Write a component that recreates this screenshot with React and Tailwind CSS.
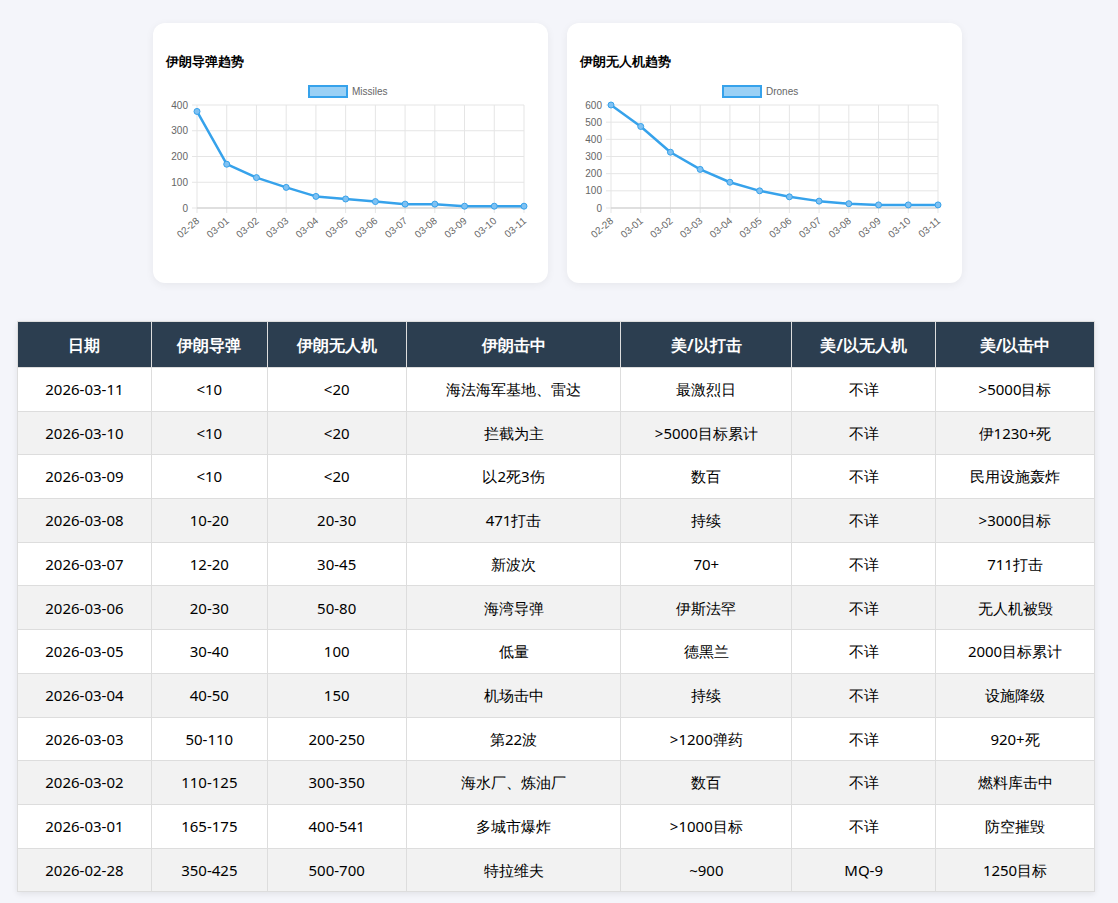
import React from "react";

const labels = ["02-28","03-01","03-02","03-03","03-04","03-05","03-06","03-07","03-08","03-09","03-10","03-11"];
const missiles = [375,170,118,80,45,35,25,15,15,7,7,7];
const drones = [600,475,325,225,150,100,65,40,25,18,18,18];

const rows = [
  ["2026-03-11","<10","<20","海法海军基地、雷达","最激烈日","不详",">5000目标"],
  ["2026-03-10","<10","<20","拦截为主",">5000目标累计","不详","伊1230+死"],
  ["2026-03-09","<10","<20","以2死3伤","数百","不详","民用设施轰炸"],
  ["2026-03-08","10-20","20-30","471打击","持续","不详",">3000目标"],
  ["2026-03-07","12-20","30-45","新波次","70+","不详","711打击"],
  ["2026-03-06","20-30","50-80","海湾导弹","伊斯法罕","不详","无人机被毁"],
  ["2026-03-05","30-40","100","低量","德黑兰","不详","2000目标累计"],
  ["2026-03-04","40-50","150","机场击中","持续","不详","设施降级"],
  ["2026-03-03","50-110","200-250","第22波",">1200弹药","不详","920+死"],
  ["2026-03-02","110-125","300-350","海水厂、炼油厂","数百","不详","燃料库击中"],
  ["2026-03-01","165-175","400-541","多城市爆炸",">1000目标","不详","防空摧毁"],
  ["2026-02-28","350-425","500-700","特拉维夫","~900","MQ-9","1250目标"],
];
const heads = ["日期","伊朗导弹","伊朗无人机","伊朗击中","美/以打击","美/以无人机","美/以击中"];
const widths = ["w-[134px]","w-[116px]","w-[139px]","w-[215px]","w-[171px]","w-[144px]","w-[159px]"];

let Chart = ({ title, label, data, max, step }) => {
  const x0 = 31, x1 = 358, y0 = 133, y1 = 30;
  const xs = data.map((_, i) => x0 + (i * (x1 - x0)) / (data.length - 1));
  const ys = data.map((v) => y0 - (v / max) * (y0 - y1));
  const ticks = [];
  for (let t = 0; t <= max; t += step) ticks.push(t);
  return (
    <div className="w-[395px] h-[260px] bg-white rounded-xl shadow-[0_2px_8px_rgba(0,0,0,0.06)] pt-[30px] px-[13px]">
      <div className="text-[13px] font-bold leading-4 text-black">{title}</div>
      <svg width="369" height="190" className="mt-[6px]" fontFamily="'Liberation Sans', sans-serif">
        <rect x="143" y="11" width="38" height="11" fill="#9ad0f5" stroke="#36a2eb" strokeWidth="2" />
        <text x="186" y="20" fontSize="10" fill="#666">{label}</text>
        {ticks.map((t) => {
          const y = y0 - (t / max) * (y0 - y1);
          return (
            <g key={t}>
              <line x1={x0 - 5} x2={x1} y1={y} y2={y} stroke="#e5e5e5" />
              <text x={x0 - 9} y={y + 3.5} fontSize="10" fill="#666" textAnchor="end">{t}</text>
            </g>
          );
        })}
        {xs.map((x, i) => (
          <g key={i}>
            <line x1={x} x2={x} y1={y1} y2={y0 + 5} stroke="#e5e5e5" />
            <text x={x + 3} y={y0 + 14} fontSize="10" fill="#666" textAnchor="end" transform={`rotate(-40 ${x + 3} ${y0 + 14})`}>{labels[i]}</text>
          </g>
        ))}
        <line x1={x0} x2={x1} y1={y0} y2={y0} stroke="#ccc" />
        <polyline points={xs.map((x, i) => `${x},${ys[i]}`).join(" ")} fill="none" stroke="#36a2eb" strokeWidth="2.5" strokeLinejoin="round" />
        {xs.map((x, i) => (
          <circle key={i} cx={x} cy={ys[i]} r="3" fill="#7fc1f2" stroke="#36a2eb" strokeWidth="1" />
        ))}
      </svg>
    </div>
  );
};

export default function App() {
  return (
    <div className="min-h-[903px] bg-[#f4f5fa] pt-[23px] pb-[14px] font-['Liberation_Sans','Noto_Sans_CJK_SC',sans-serif]">
      <div className="flex justify-center gap-[19px] pr-[4px]">
        <Chart title="伊朗导弹趋势" label="Missiles" data={missiles} max={400} step={100} />
        <Chart title="伊朗无人机趋势" label="Drones" data={drones} max={600} step={100} />
      </div>
      <table className="mt-[38px] ml-[17px] w-[1078px] border-collapse bg-white text-[15px] text-black shadow-[0_2px_6px_rgba(0,0,0,0.08)]">
        <thead>
          <tr className="bg-[#2c3e50] text-white h-[46px]">
            {heads.map((h, i) => (
              <th key={h} className={`${widths[i]} border border-[#ddd] font-bold text-[16px]`}>{h}</th>
            ))}
          </tr>
        </thead>
        <tbody>
          {rows.map((r, i) => (
            <tr key={i} className={`h-[43.7px] ${i % 2 ? "bg-[#f2f2f2]" : "bg-white"}`}>
              {r.map((c, j) => (
                <td key={j} className="border border-[#ddd] text-center">{c}</td>
              ))}
            </tr>
          ))}
        </tbody>
      </table>
    </div>
  );
}
